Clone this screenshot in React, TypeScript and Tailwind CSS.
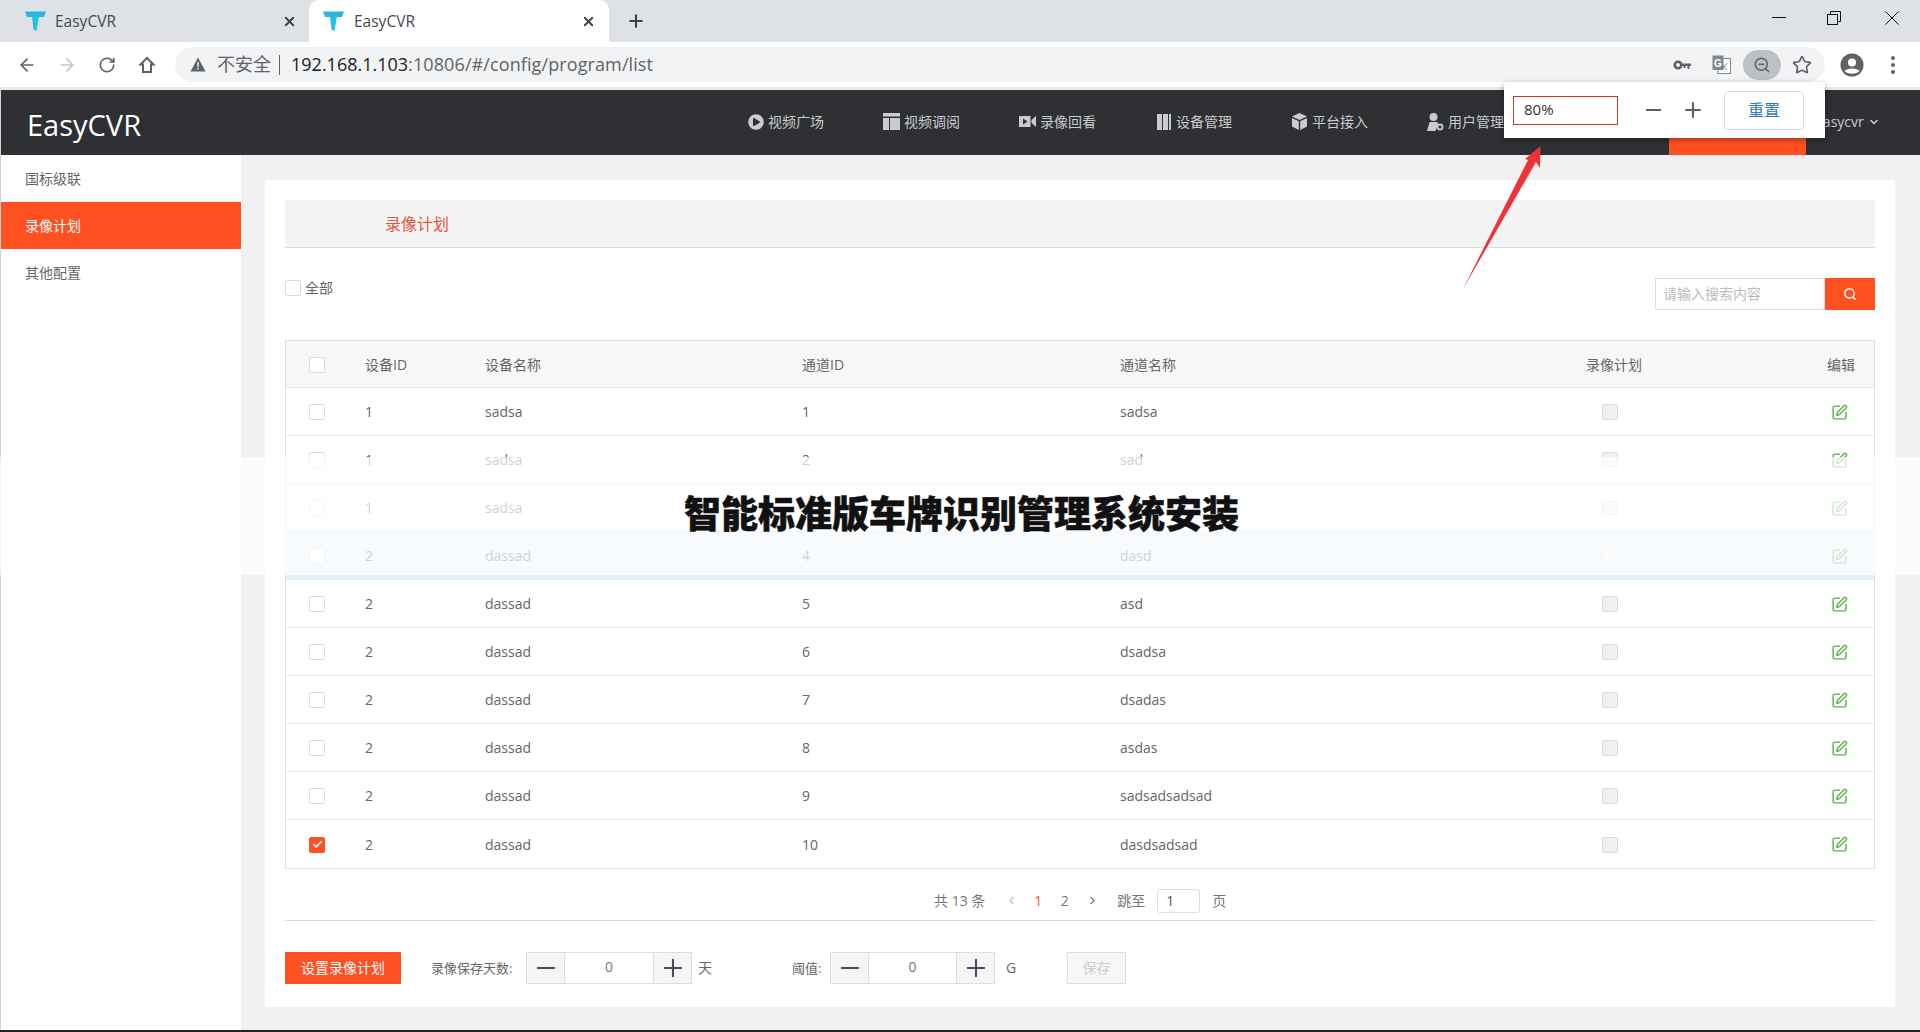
import React from "react";
import { ArrowLeft, ArrowRight, RotateCw, ZoomOut, Star, X, Plus, SquarePen, Search, ChevronDown, ChevronLeft, ChevronRight, Check, Minus } from "lucide-react";
import { FaPlayCircle } from "react-icons/fa";

function TLogo() {
  return (
    <svg width="21" height="20" viewBox="0 0 21 20" className="shrink-0">
      <path d="M0 0.500h21l-2 5.500H14l-1 0.500H8L7 6H2z" fill="#29b6d8" />
      <path d="M7 5.500h7L11.500 20 8.500 18.500z" fill="#1fc3e6" />
    </svg>
  );
}

function HomeIcon() {
  return (
    <svg width="18" height="18" viewBox="0 0 18 18" fill="none" stroke="#5f6368" strokeWidth="2">
      <path d="M9 2 2.500 8.500H5V16h8V8.500h2.500z" strokeLinejoin="miter" />
    </svg>
  );
}

function WarnIcon() {
  return (
    <svg width="16" height="15" viewBox="0 0 16 15">
      <path d="M8 0.500 15.500 14.500H0.500z" fill="#5f6368" />
      <rect x="7.300" y="5" width="1.400" height="5" fill="#f1f3f4" />
      <rect x="7.300" y="11" width="1.400" height="1.500" fill="#f1f3f4" />
    </svg>
  );
}

function KeyIcon() {
  return (
    <svg width="18" height="10" viewBox="0 0 18 10" fill="none">
      <circle cx="5" cy="5" r="3.300" stroke="#5f6368" strokeWidth="2.600" />
      <path d="M8 3.500h10V6h-1.500v3h-2V6H12.500v2h-2V6H8z" fill="#5f6368" />
    </svg>
  );
}

function TranslateIcon() {
  return (
    <svg width="19" height="19" viewBox="0 0 19 19">
      <rect x="6" y="3.500" width="12.500" height="15" fill="#fff" stroke="#80868b" strokeWidth="1" />
      <path d="M9 8l6 7M15 8l-5 7" stroke="#80868b" strokeWidth="1" />
      <rect x="0.500" y="0.500" width="11" height="14.500" rx="0.500" fill="#80868b" />
      <text x="2" y="11.500" fontSize="10" fontWeight="700" fill="#fff" fontFamily="Liberation Sans, sans-serif">G</text>
    </svg>
  );
}

function AvatarIcon() {
  return (
    <svg width="24" height="24" viewBox="0 0 24 24">
      <circle cx="12" cy="12" r="11.500" fill="#5f6368" />
      <circle cx="12" cy="9.500" r="4" fill="#fff" />
      <path d="M4.500 18c2-3.500 13-3.500 15 0-3.500 3.500-11.500 3.500-15 0z" fill="#fff" />
    </svg>
  );
}

function TableNavIcon() {
  return (
    <svg width="17" height="17" viewBox="0 0 17 17" fill="#c9cbcc">
      <rect x="0" y="0" width="17" height="3.500" />
      <rect x="0" y="5" width="6" height="12" />
      <rect x="7" y="5" width="10" height="12" />
    </svg>
  );
}

function VideoNavIcon() {
  return (
    <svg width="17" height="13" viewBox="0 0 17 13" fill="#c9cbcc">
      <path d="M0 1h11.500v11H0zM4 3.500v6l4.500-3z" fillRule="evenodd" />
      <path d="M12.500 5 17 1v11l-4.500-4z" />
    </svg>
  );
}

function ColumnsIcon() {
  return (
    <svg width="14" height="16" viewBox="0 0 14 16" fill="#c9cbcc">
      <rect x="0" y="0" width="5" height="16" />
      <rect x="6" y="0" width="5" height="16" />
      <rect x="12" y="0" width="2" height="16" />
    </svg>
  );
}

function CubeIcon() {
  return (
    <svg width="15" height="17" viewBox="0 0 15 17" fill="#c9cbcc">
      <path d="M7.500 0 15 3.500 7.500 7 0 3.500z" />
      <path d="M0 5l6.800 3.200V17L0 13.500z" />
      <path d="M15 5 8.200 8.200V17L15 13.500z" />
    </svg>
  );
}

function UserCogIcon() {
  return (
    <svg width="17" height="18" viewBox="0 0 17 18" fill="#c9cbcc">
      <circle cx="6.500" cy="4" r="4" />
      <path d="M2.500 9h8l0.500 3L8.500 18H0z" />
      <circle cx="13" cy="14" r="2.500" fill="none" stroke="#c9cbcc" strokeWidth="1.800" />
    </svg>
  );
}

function Box({ state }: { state: "empty" | "disabled" | "checked" }) {
  if (state === "checked") {
    return (
      <span className="flex h-4 w-4 items-center justify-center rounded-[2px] bg-[#ff5022]">
        <Check size={11} strokeWidth={4} className="text-white" />
      </span>
    );
  }
  if (state === "disabled") {
    return <span className="block h-4 w-4 rounded-[2px] border border-[#dcdcdc] bg-[#f0f0f0]" />;
  }
  return <span className="block h-4 w-4 rounded-[2px] border border-[#dcdcdc] bg-white" />;
}

const rows = [
  ["1", "sadsa", "1", "sadsa"],
  ["1", "sadsa", "2", "sad"],
  ["1", "sadsa", "", ""],
  ["2", "dassad", "4", "dasd"],
  ["2", "dassad", "5", "asd"],
  ["2", "dassad", "6", "dsadsa"],
  ["2", "dassad", "7", "dsadas"],
  ["2", "dassad", "8", "asdas"],
  ["2", "dassad", "9", "sadsadsadsad"],
  ["2", "dassad", "10", "dasdsadsad"],
];

const nav = [
  { icon: <FaPlayCircle size={16} />, label: "视频广场" },
  { icon: <TableNavIcon />, label: "视频调阅" },
  { icon: <VideoNavIcon />, label: "录像回看" },
  { icon: <ColumnsIcon />, label: "设备管理" },
  { icon: <CubeIcon />, label: "平台接入" },
  { icon: <UserCogIcon />, label: "用户管理" },
];

const gridCols = "grid grid-cols-[79px_120px_317px_318px_371px_248px_1fr] items-center";

function Stepper({ width }: { width: string }) {
  return (
    <div className={`flex h-8 items-stretch border border-[#dedede] ${width}`}>
      <span className="flex w-[38px] items-center justify-center border-r border-[#dedede] bg-[#f5f5f5] text-[#4a4a62]">
        <Minus size={28} strokeWidth={1.800} />
      </span>
      <span className="flex flex-1 items-center justify-center pb-[3px] text-sm text-[#777]">0</span>
      <span className="flex w-[38px] items-center justify-center border-l border-[#dedede] bg-[#f5f5f5] text-[#4a4a62]">
        <Plus size={28} strokeWidth={1.800} />
      </span>
    </div>
  );
}

export default function App() {
  return (
    <div className="relative flex h-[1032px] w-[1920px] flex-col overflow-hidden bg-white font-['Open_Sans','Noto_Sans_CJK_SC',sans-serif] text-sm text-[#666]">
      {/* tab strip */}
      <div className="flex h-[42px] shrink-0 items-stretch bg-[#dee1e6]">
        <div className="flex w-[309px] items-center pl-[25px] pr-[12px] text-[#45494e]">
          <TLogo />
          <span className="ml-[9px] text-[15.500px]">EasyCVR</span>
          <X size={15} strokeWidth={3} className="ml-auto text-[#3c4043]" />
        </div>
        <div className="flex w-[300px] items-center rounded-t-[10px] bg-white pl-[14px] pr-[13px] text-[#45494e]">
          <TLogo />
          <span className="ml-[10px] text-[15.500px]">EasyCVR</span>
          <X size={15} strokeWidth={3} className="ml-auto text-[#3c4043]" />
        </div>
        <div className="flex items-center pl-[17px] text-[#3c4043]">
          <Plus size={20} strokeWidth={2.500} />
        </div>
        <div className="ml-auto flex items-center pr-[21px] text-[#111]">
          <svg width="14" height="2" className="mr-[41px] mt-[-6px]"><rect width="14" height="1" fill="#111" /></svg>
          <svg width="14" height="14" viewBox="0 0 14 14" fill="none" stroke="#111" className="mr-[44px] mt-[-6px]">
            <rect x="0.500" y="3.500" width="10" height="10" />
            <path d="M3.500 3V0.500H13.500V10.500H11" />
          </svg>
          <svg width="14" height="14" viewBox="0 0 14 14" fill="none" stroke="#111" className="mt-[-6px]">
            <path d="M0.500 0.500 13.500 13.500M13.500 0.500 0.500 13.500" />
          </svg>
        </div>
      </div>

      {/* toolbar */}
      <div className="flex h-[45px] shrink-0 items-center bg-white pl-[7px]">
        <span className="flex w-10 justify-center text-[#5f6368]"><ArrowLeft size={20} strokeWidth={2} /></span>
        <span className="flex w-10 justify-center text-[#c2c5c9]"><ArrowRight size={20} strokeWidth={2} /></span>
        <span className="flex w-10 justify-center text-[#5f6368]"><RotateCw size={18} strokeWidth={2.200} /></span>
        <span className="flex w-10 justify-center"><HomeIcon /></span>
        <div className="ml-2 flex h-[35px] w-[1650px] items-center rounded-full bg-[#f1f3f4] pl-[15px]">
          <WarnIcon />
          <span className="ml-[11px] text-[18px] text-[#5f6368]">不安全</span>
          <span className="ml-[8px] h-[20px] w-px bg-[#5f6368]" />
          <span className="ml-[11px] text-[18px]">
            <span className="text-[#202124]">192.168.1.103</span>
            <span className="tracking-[0.1px] text-[#5f6368]">:10806/#/config/program/list</span>
          </span>
          <div className="ml-auto flex items-center pr-[13px]">
            <span className="mr-[21px]"><KeyIcon /></span>
            <span className="mr-[12px]"><TranslateIcon /></span>
            <span className="flex h-[30px] w-[38px] items-center justify-center rounded-full bg-[#bdc1c6] text-[#5f6368]">
              <ZoomOut size={18} strokeWidth={2} />
            </span>
            <Star size={20} strokeWidth={2} className="ml-[11px] text-[#5f6368]" />
          </div>
        </div>
        <span className="ml-[15px]"><AvatarIcon /></span>
        <span className="ml-[27px] flex flex-col gap-[3px]">
          <i className="block h-[4px] w-[4px] rounded-full bg-[#5f6368]" />
          <i className="block h-[4px] w-[4px] rounded-full bg-[#5f6368]" />
          <i className="block h-[4px] w-[4px] rounded-full bg-[#5f6368]" />
        </span>
      </div>
      <div className="h-[3px] shrink-0 bg-[#e8eaed]" />

      {/* page */}
      <div className="flex flex-1 flex-col bg-[#d2d2d2] pl-px">
        <header className="flex h-[65px] shrink-0 items-start bg-[#2e3033] text-[#c9cbcc]">
          <div className="flex h-full w-[716px] items-center pl-[26px] pt-[3px] text-[29px] leading-none text-white">EasyCVR</div>
          {nav.map((n) => (
            <div key={n.label} className="flex h-[65px] w-[136px] items-center gap-[4px] whitespace-nowrap pb-[2px] pl-[30px] text-sm">
              <span className="flex w-[17px] shrink-0 justify-center">{n.icon}</span>
              <span>{n.label}</span>
            </div>
          ))}
          <div className="h-[65px] w-[136px]" />
          <div className="h-[65px] w-[137px] bg-[#ff5022]" />
          <div className="flex h-[65px] items-center gap-1 pb-[2px] pl-[9px] text-sm">
            <span>easycvr</span>
            <ChevronDown size={12} strokeWidth={3} />
          </div>
        </header>

        <div className="flex h-[875px] shrink-0">
          <aside className="w-[240px] shrink-0 bg-white text-sm text-[#666]">
            <div className="flex h-[47px] items-center pl-[24px]">国标级联</div>
            <div className="flex h-[47px] items-center bg-[#ff5022] pl-[24px] text-white">录像计划</div>
            <div className="flex h-[47px] items-center pl-[24px]">其他配置</div>
          </aside>

          <main className="flex-1 bg-[#f1f1f1] pb-[23px] pl-[24px] pr-[25px] pt-[25px]">
            <div className="h-[827px] bg-white px-[20px] pt-[20px]">
              <div className="flex h-[48px] items-center border-b border-[#dcdcdc] bg-[#f4f4f4] pl-[100px] text-base text-[#e2583e]">录像计划</div>

              <div className="mt-[30px] flex h-[32px] items-start justify-between">
                <label className="flex items-center gap-[4px] pt-[2px] text-[#666]">
                  <Box state="empty" />
                  <span className="leading-[16px]">全部</span>
                </label>
                <div className="flex h-[32px]">
                  <div className="flex w-[170px] items-center border border-[#dedede] bg-white pl-[7px] text-[#bbb]">请输入搜索内容</div>
                  <div className="flex w-[50px] items-center justify-center bg-[#ff5022] text-white">
                    <Search size={14} strokeWidth={2.500} />
                  </div>
                </div>
              </div>

              <div className="mt-[30px] border border-[#e0e0e0]">
                <div className={`${gridCols} h-[47px] border-b border-[#e8e8e8] bg-[#f7f7f7] pt-[2px]`}>
                  <span className="pl-[23px]"><Box state="empty" /></span>
                  <span>设备ID</span>
                  <span>设备名称</span>
                  <span>通道ID</span>
                  <span>通道名称</span>
                  <span className="pr-[2px] text-center">录像计划</span>
                  <span className="pr-[19px] text-right">编辑</span>
                </div>
                {rows.map((r, i) => (
                  <div
                    key={i}
                    className={`${gridCols} h-[48px] pt-[1px] ${i < 9 ? "border-b border-[#e8e8e8]" : ""} ${i === 3 ? "bg-[#e4f0fb]" : "bg-white"}`}
                  >
                    <span className="pl-[23px]"><Box state={i === 9 ? "checked" : "empty"} /></span>
                    <span>{r[0]}</span>
                    <span>{r[1]}</span>
                    <span>{r[2]}</span>
                    <span>{r[3]}</span>
                    <span className="flex justify-center pr-[11px]"><Box state="disabled" /></span>
                    <span className="flex justify-end pr-[26px] text-[#5fb052]"><SquarePen size={17} strokeWidth={2} /></span>
                  </div>
                ))}
              </div>

              <div className="flex h-[52px] items-center border-b border-[#d9d9d9] pl-[649px] pt-[12px] text-[#777]">
                <span>共 13 条</span>
                <span className="ml-[12px] flex w-[28px] justify-center text-[#bbb]"><ChevronLeft size={13} /></span>
                <span className="flex w-[26px] justify-center text-[#e2583e]">1</span>
                <span className="flex w-[27px] justify-center">2</span>
                <span className="flex w-[29px] justify-center"><ChevronRight size={13} /></span>
                <span className="ml-[10px]">跳至</span>
                <span className="ml-[12px] flex h-[24px] w-[43px] items-center rounded-[3px] border border-[#dedede] pl-[8px] text-[#555]">1</span>
                <span className="ml-[12px]">页</span>
              </div>

              <div className="mt-[31px] flex h-[32px] items-center">
                <button className="h-[32px] w-[116px] bg-[#ff5022] text-sm text-white">设置录像计划</button>
                <span className="ml-[30px] w-[95px] whitespace-nowrap text-[13px]">录像保存天数:</span>
                <Stepper width="w-[166px]" />
                <span className="ml-[6px] w-[14px]">天</span>
                <span className="ml-[80px] w-[38px] whitespace-nowrap text-[13px]">阈值:</span>
                <Stepper width="w-[165px]" />
                <span className="ml-[11px] w-[10px]">G</span>
                <button className="ml-[51px] h-[32px] w-[59px] border border-[#dedede] bg-[#f7f7f7] text-sm text-[#ccc]">保存</button>
              </div>
            </div>
          </main>
        </div>
      </div>
      <div className="h-[2px] shrink-0 bg-[#222]" />

      {/* translucent watermark band */}
      <div className="absolute left-0 top-[457px] flex h-[118px] w-[1920px] items-center justify-center bg-white/70 pb-[7px] pl-[3px]">
        <span className="font-['Noto_Sans_CJK_SC',sans-serif] text-[37px] font-black leading-none text-[#111] [-webkit-text-stroke:0.5px_#111]">智能标准版车牌识别管理系统安装</span>
      </div>

      {/* zoom popup */}
      <div className="absolute left-[1504px] top-[82px] flex h-[56px] w-[321px] items-center bg-white shadow-[0_2px_6px_rgba(0,0,0,0.35)]">
        <div className="ml-[9px] flex h-[29px] w-[105px] items-center border border-[#c0392b] pl-[10px] text-[15px] text-[#333]">80%</div>
        <span className="ml-[28px] h-[2.500px] w-[15px] bg-[#5f6368]" />
        <Plus size={24} strokeWidth={2.200} className="ml-[20px] text-[#5f6368]" />
        <div className="ml-[19px] flex h-[39px] w-[80px] items-center justify-center rounded-[4px] border border-[#dadce0] text-base text-[#2b79c2]">重置</div>
      </div>

      {/* red annotation arrow */}
      <svg width="90" height="150" viewBox="0 0 90 150" className="absolute left-[1460px] top-[140px]">
        <polygon points="80.500,6 80,28 76,22 3,149 68,20 65,19" fill="#ee3338" />
      </svg>
    </div>
  );
}
